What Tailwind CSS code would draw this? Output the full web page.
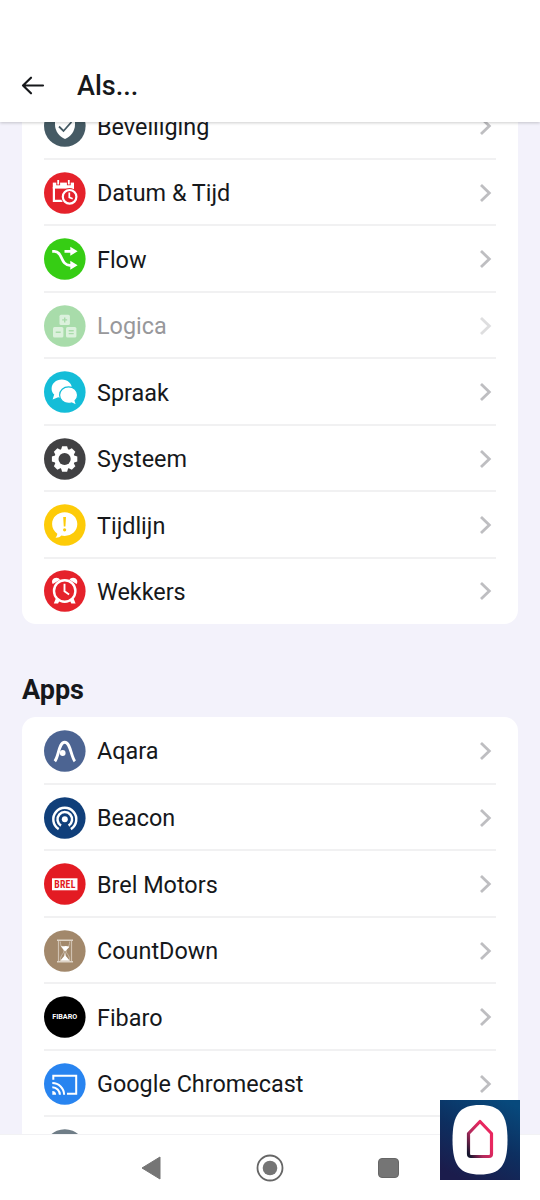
<!DOCTYPE html>
<html lang="nl">
<head>
<meta charset="utf-8">
<title>Als...</title>
<script src="https://cdn.jsdelivr.net/npm/@tailwindcss/browser@4"></script>
</head>
<body class="bg-white">
<div class="relative flex h-[1200px] w-[540px] flex-col overflow-hidden bg-white font-[Roboto,sans-serif] text-[#16181b]">
  <svg class="hidden"><defs><symbol id="chev" viewBox="0 0 14 20"><path d="M2 2l8.300 8L2 18" fill="none" stroke="#bebec1" stroke-width="2.800"/></symbol></defs></svg>

  <header class="z-10 flex h-[122px] shrink-0 items-end bg-white pb-[18px] pl-[21px] shadow-[0_1px_3px_rgba(0,0,0,0.2)]">
    <svg class="mb-[7px] h-[24px] w-[24px]" viewBox="0 0 24 24" fill="none" stroke="#16181b" stroke-width="2.200" stroke-linecap="round" stroke-linejoin="round"><path d="M22 12.500H2M10 4.700L2 12.500l8 7.800"/></svg>
    <h1 class="ml-[32px] text-[27px] leading-[36px] font-medium">Als...</h1>
  </header>

  <main class="h-[1012px] shrink-0 overflow-hidden bg-[#f3f2fb] px-[22px]">
    <ul class="-mt-[29px] rounded-[14px] bg-white px-[22px] text-[23.4px]">
      <li class="flex h-[66.5px] items-center border-b-2 border-[#f1f1f2] pt-[2px]">
        <svg class="h-[42px] w-[42px]" viewBox="0 0 42 42"><circle cx="20.800" cy="21" r="20.800" fill="#455a64"/><path d="M21 8l10 3.500v8c0 7-4.500 12-10 14.500-5.500-2.500-10-7.500-10-14.500v-8z" fill="#fff"/><path d="M15 21.500l4.500 4.500 8-9" fill="none" stroke="#455a64" stroke-width="1.800"/></svg>
        <span class="ml-[11px] flex-1 pt-[2px]">Beveiliging</span><svg class="mr-[3px] h-[20px] w-[14px]"><use href="#chev"/></svg>
      </li>
      <li class="flex h-[66.5px] items-center border-b-2 border-[#f1f1f2] pt-[2px]">
        <svg class="h-[42px] w-[42px]" viewBox="0 0 42 42"><circle cx="20.800" cy="21" r="20.800" fill="#e5222b"/><path d="M9.900 15V28.800H19M28.900 15v3" fill="none" stroke="#fff" stroke-width="2.200"/><path d="M8.800 10.600h21.200v6h-21.200z" fill="#fff"/><path d="M14.200 8v5.200M24.800 8v5.200" stroke="#e5222b" stroke-width="3.800"/><path d="M14.200 8v4.600M24.800 8v4.600" stroke="#fff" stroke-width="1.800"/><circle cx="25.600" cy="24.800" r="8.800" fill="#e5222b"/><circle cx="25.600" cy="24.800" r="6.800" fill="none" stroke="#fff" stroke-width="2.200"/><path d="M25.300 20.600v4.800l3.400 1.300" fill="none" stroke="#fff" stroke-width="1.700"/></svg>
        <span class="ml-[11px] flex-1 pt-[2px]">Datum &amp; Tijd</span><svg class="mr-[3px] h-[20px] w-[14px]"><use href="#chev"/></svg>
      </li>
      <li class="flex h-[66.5px] items-center border-b-2 border-[#f1f1f2] pt-[2px]">
        <svg class="h-[42px] w-[42px]" viewBox="0 0 42 42"><circle cx="20.800" cy="21" r="20.800" fill="#36cd14"/><path d="M8.200 13.300h2.300C19 13.300 16 27.300 26 27.300h2M20.500 13.300H28" fill="none" stroke="#fff" stroke-width="2.700"/><path d="M26.300 8.800l7.300 4.500-7.300 4.500zM26.300 22.800l7.300 4.500-7.300 4.500z" fill="#fff"/></svg>
        <span class="ml-[11px] flex-1 pt-[2px]">Flow</span><svg class="mr-[3px] h-[20px] w-[14px]"><use href="#chev"/></svg>
      </li>
      <li class="flex h-[66.5px] items-center border-b-2 border-[#f1f1f2] pt-[2px]">
        <svg class="h-[42px] w-[42px]" viewBox="0 0 42 42"><circle cx="20.800" cy="21" r="20.800" fill="#a8dcaa"/><g fill="#dcf1dd"><rect x="15.500" y="9.700" width="10.400" height="10.400" rx="1.500"/><rect x="9" y="22" width="10.400" height="10.400" rx="1.500"/><rect x="22" y="22" width="10.400" height="10.400" rx="1.500"/></g><path d="M20.700 12.400v5M18.200 14.900h5M11.700 27.200h5M24.700 25.800h5M24.700 28.600h5" stroke="#a8dcaa" stroke-width="1.400"/></svg>
        <span class="ml-[11px] flex-1 pt-[2px] text-[#98989b]">Logica</span><svg class="mr-[3px] h-[20px] w-[14px] opacity-50"><use href="#chev"/></svg>
      </li>
      <li class="flex h-[66.5px] items-center border-b-2 border-[#f1f1f2] pt-[2px]">
        <svg class="h-[42px] w-[42px]" viewBox="0 0 42 42"><circle cx="20.800" cy="21" r="20.800" fill="#14bdd8"/><path d="M17.800 8.600c5.800 0 10.200 4 10.200 9.100s-4.400 9.100-10.200 9.100c-1.300 0-2.500-.2-3.600-.6L8.600 28.600l1.600-5c-1.600-1.500-2.600-3.600-2.600-5.900 0-5.100 4.400-9.100 10.200-9.100z" fill="#fff"/><path d="M24.600 15.900c5.100 0 9 3.500 9 8.200 0 2.300-1 4.300-2.500 5.700l1.500 4.600-5.200-2.400c-.9.200-1.800.3-2.800.3-5.100 0-9-3.500-9-8.200s3.900-8.200 9-8.200z" fill="#fff" stroke="#14bdd8" stroke-width="1.200"/></svg>
        <span class="ml-[11px] flex-1 pt-[2px]">Spraak</span><svg class="mr-[3px] h-[20px] w-[14px]"><use href="#chev"/></svg>
      </li>
      <li class="flex h-[66.5px] items-center border-b-2 border-[#f1f1f2] pt-[2px]">
        <svg class="h-[42px] w-[42px]" viewBox="0 0 42 42"><circle cx="20.800" cy="21" r="20.800" fill="#414143"/><g transform="translate(20.600 21)"><g fill="#fff"><path id="tooth" d="M-4-8L-2.500-12.700h5L4-8V8L2.500 12.700h-5L-4 8z"/><use href="#tooth" transform="rotate(45)"/><use href="#tooth" transform="rotate(90)"/><use href="#tooth" transform="rotate(135)"/></g><circle r="10.200" fill="#fff"/><circle r="6.100" fill="#414143"/></g></svg>
        <span class="ml-[11px] flex-1 pt-[2px]">Systeem</span><svg class="mr-[3px] h-[20px] w-[14px]"><use href="#chev"/></svg>
      </li>
      <li class="flex h-[66.5px] items-center border-b-2 border-[#f1f1f2] pt-[2px]">
        <svg class="h-[42px] w-[42px]" viewBox="0 0 42 42"><circle cx="20.800" cy="21" r="20.800" fill="#fdcb08"/><path d="M20.700 8.300c7.200 0 12.600 5.100 12.600 11.800s-5.400 11.800-12.600 11.800c-1.200 0-2.300-.1-3.300-.4-1.500 1.500-3.400 2.300-5.900 2.200 1.100-1.200 1.700-2.600 1.800-4-3.200-2.100-5.200-5.600-5.200-9.600 0-6.700 5.400-11.800 12.600-11.800z" fill="#fff"/><path d="M19.200 13h2.800l-.6 9.500h-1.600z" fill="#fdcb08"/><circle cx="20.600" cy="25.800" r="1.600" fill="#fdcb08"/></svg>
        <span class="ml-[11px] flex-1 pt-[2px]">Tijdlijn</span><svg class="mr-[3px] h-[20px] w-[14px]"><use href="#chev"/></svg>
      </li>
      <li class="flex h-[65.5px] items-center">
        <svg class="h-[42px] w-[42px]" viewBox="0 0 42 42"><circle cx="20.800" cy="21" r="20.800" fill="#e5222b"/><path d="M8.800 14c-2-3 .2-6.300 3.500-6.300 1.800 0 3 .8 3.700 2zM32.600 14c2-3-.2-6.300-3.500-6.300-1.800 0-3 .8-3.700 2zM11.800 28.500l3.500 2.600-1.200 2.400h-4.300zM29.600 28.500l-3.500 2.600 1.200 2.400h4.300z" fill="#fff"/><circle cx="20.700" cy="21" r="10.700" fill="#e5222b" stroke="#fff" stroke-width="2.400"/><path d="M20.500 13.800v7.500l4.600 3.300" fill="none" stroke="#fff" stroke-width="1.900"/></svg>
        <span class="ml-[11px] flex-1 pt-[2px]">Wekkers</span><svg class="mr-[3px] h-[20px] w-[14px]"><use href="#chev"/></svg>
      </li>
    </ul>

    <h2 class="mt-[48px] text-[27px] leading-[36px] font-bold">Apps</h2>

    <ul class="mt-[9px] rounded-t-[14px] bg-white px-[22px] text-[23.4px]">
      <li class="flex h-[67.5px] items-center border-b-2 border-[#f1f1f2] pt-[2px]">
        <svg class="h-[42px] w-[42px]" viewBox="0 0 42 42"><circle cx="20.800" cy="21" r="20.800" fill="#4c6492"/><path d="M10.800 31.300C14.800 26.500 14.800 12.300 20.700 12.300S26.800 26.500 30.900 31.300" fill="none" stroke="#fff" stroke-width="2.900"/><circle cx="18.700" cy="23" r="2.900" fill="#fff"/></svg>
        <span class="ml-[11px] flex-1 pt-[2px]">Aqara</span><svg class="mr-[3px] h-[20px] w-[14px]"><use href="#chev"/></svg>
      </li>
      <li class="flex h-[66.5px] items-center border-b-2 border-[#f1f1f2] pt-[2px]">
        <svg class="h-[42px] w-[42px]" viewBox="0 0 42 42"><circle cx="20.800" cy="21" r="20.800" fill="#103f7a"/><circle cx="20.800" cy="22.300" r="3" fill="#fff"/><path d="M17 28.600a7.300 7.300 0 1 1 7.600 0M14.700 32.100a11.500 11.500 0 1 1 12.200 0" fill="none" stroke="#fff" stroke-width="2.500"/></svg>
        <span class="ml-[11px] flex-1 pt-[2px]">Beacon</span><svg class="mr-[3px] h-[20px] w-[14px]"><use href="#chev"/></svg>
      </li>
      <li class="flex h-[66.5px] items-center border-b-2 border-[#f1f1f2] pt-[2px]">
        <svg class="h-[42px] w-[42px]" viewBox="0 0 42 42"><circle cx="20.800" cy="21" r="20.800" fill="#e31b23"/><rect x="8" y="15.300" width="25.500" height="12" fill="#fff"/><text x="20.800" y="24.900" font-size="10" font-weight="700" text-anchor="middle" textLength="21.500" lengthAdjust="spacing" font-family="Roboto Condensed, Roboto, sans-serif" fill="#e31b23" transform="translate(20.800 0) scale(.98 1) translate(-20.800 0)">BREL</text></svg>
        <span class="ml-[11px] flex-1 pt-[2px]">Brel Motors</span><svg class="mr-[3px] h-[20px] w-[14px]"><use href="#chev"/></svg>
      </li>
      <li class="flex h-[66.5px] items-center border-b-2 border-[#f1f1f2] pt-[2px]">
        <svg class="h-[42px] w-[42px]" viewBox="0 0 42 42"><circle cx="20.800" cy="21" r="20.800" fill="#a2886b"/><path d="M13 10.300h16M13 31.800h16" stroke="#ded3c6" stroke-width="1.600"/><path d="M14.500 11v20M27.500 11v20" stroke="#d0c1b0" stroke-width="1.200"/><path d="M16.300 11.500c0 6 3.600 6.500 3.600 9.500s-3.600 3.500-3.600 9.800M25.700 11.500c0 6-3.600 6.500-3.600 9.500s3.600 3.500 3.600 9.800" fill="none" stroke="#cbbba9" stroke-width=".9"/><path d="M16.300 15.500c2.500 2 4-.5 9.200 1.200L21 21.500zM21 21.500l.8 4.500 4 4.800h-9.600l4-4.800z" fill="#fff"/></svg>
        <span class="ml-[11px] flex-1 pt-[2px]">CountDown</span><svg class="mr-[3px] h-[20px] w-[14px]"><use href="#chev"/></svg>
      </li>
      <li class="flex h-[66.5px] items-center border-b-2 border-[#f1f1f2] pt-[2px]">
        <svg class="h-[42px] w-[42px]" viewBox="0 0 42 42"><circle cx="20.800" cy="21" r="20.800" fill="#000"/><text x="20.700" y="23.400" font-size="6.600" font-weight="700" text-anchor="middle" textLength="25" lengthAdjust="spacingAndGlyphs" fill="#fff">FIBARO</text></svg>
        <span class="ml-[11px] flex-1 pt-[2px]">Fibaro</span><svg class="mr-[3px] h-[20px] w-[14px]"><use href="#chev"/></svg>
      </li>
      <li class="flex h-[66.5px] items-center border-b-2 border-[#f1f1f2] pt-[2px]">
        <svg class="h-[42px] w-[42px]" viewBox="0 0 42 42"><circle cx="20.800" cy="21" r="20.800" fill="#2884f0"/><path d="M9.300 16.800v-4H32.200v18H23" fill="none" stroke="#fff" stroke-width="2"/><path d="M8.300 20a11.800 11.800 0 0 1 11.800 11.800M8.300 24.200a7.600 7.600 0 0 1 7.600 7.600" fill="none" stroke="#fff" stroke-width="2"/><path d="M8.300 28a3.800 3.800 0 0 1 3.800 3.800H8.300z" fill="#fff"/></svg>
        <span class="ml-[11px] flex-1 pt-[2px]">Google Chromecast</span><svg class="mr-[3px] h-[20px] w-[14px]"><use href="#chev"/></svg>
      </li>
      <li class="flex h-[66.5px] items-center">
        <svg class="h-[42px] w-[42px]" viewBox="0 0 42 42"><circle cx="20.800" cy="21" r="20.800" fill="#6f7d87"/></svg>
      </li>
    </ul>
  </main>

  <nav class="flex flex-1 items-center border-t border-[#f2f2f4] bg-white pl-[141px]">
    <svg class="h-[24px] w-[20px]" viewBox="0 0 20 24"><path d="M1 12L19 1v22z" fill="#757575" stroke="#757575" stroke-linejoin="round"/></svg>
    <svg class="ml-[95px] h-[28px] w-[28px]" viewBox="0 0 28 28"><circle cx="14" cy="14" r="12.500" fill="none" stroke="#666" stroke-width="1.800"/><circle cx="14" cy="14" r="7.300" fill="#757575"/></svg>
    <div class="ml-[94px] h-[20px] w-[21px] rounded-[4px] border border-[#666] bg-[#757575]"></div>
  </nav>

  <div class="absolute top-[1100px] left-[440px] h-[80px] w-[80px]">
    <svg class="h-full w-full" viewBox="0 0 80 80">
      <defs>
        <linearGradient id="bg" x1=".8" y1="0" x2=".3" y2="1"><stop offset="0" stop-color="#07497c"/><stop offset=".5" stop-color="#0d2f60"/><stop offset="1" stop-color="#1b1c4c"/></linearGradient>
        <linearGradient id="house" x1="0" y1="1" x2=".75" y2=".4"><stop offset=".05" stop-color="#15152e"/><stop offset=".5" stop-color="#b02a5c"/><stop offset="1" stop-color="#e8275f"/></linearGradient>
      </defs>
      <rect width="80" height="80" fill="url(#bg)"/>
      <path d="M40 5c20 0 27.500 9 27.500 35S60 74.500 40 74.500 12.500 66 12.500 40 20 5 40 5z" fill="#fff"/>
      <path d="M28.500 33.500L40 21.500l11.500 12V54a2.500 2.500 0 0 1-2.500 2.500H31a2.500 2.500 0 0 1-2.500-2.500z" fill="none" stroke="url(#house)" stroke-width="3.200" stroke-linejoin="round"/>
    </svg>
  </div>
</div>
</body>
</html>
